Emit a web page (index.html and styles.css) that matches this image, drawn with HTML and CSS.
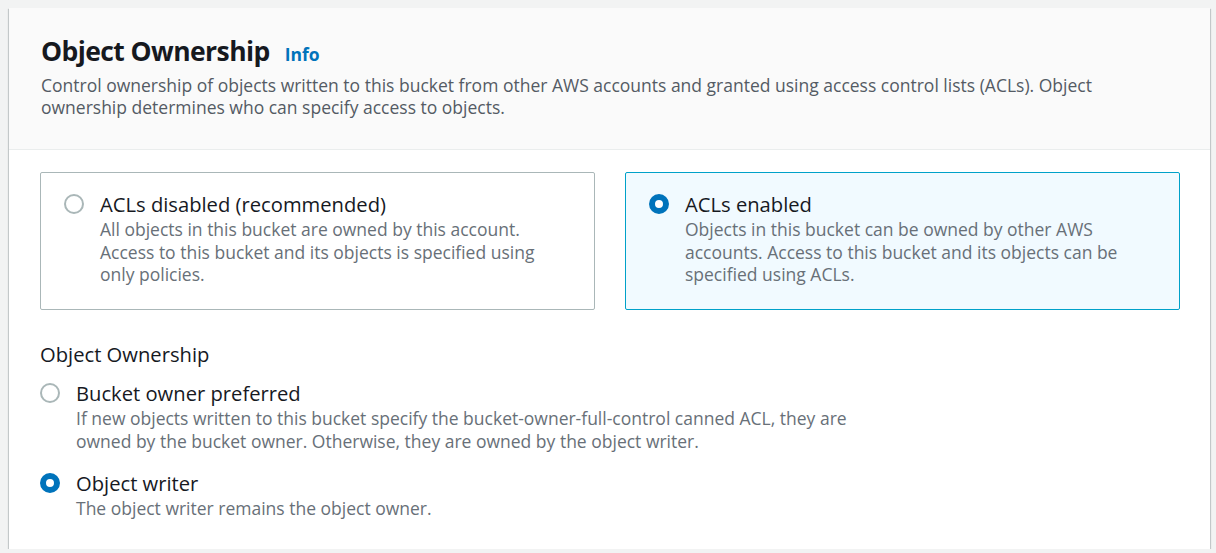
FILE: index.html
```html
<!DOCTYPE html>
<html lang="en">
<head>
<meta charset="utf-8">
<title>Object Ownership</title>
<link rel="stylesheet" href="styles.css">
</head>
<body>
<div class="container">
  <div class="header">
    <h2 class="title">Object Ownership <a class="info" href="#">Info</a></h2>
    <p class="header-desc">Control ownership of objects written to this bucket from other AWS accounts and granted using access control lists (ACLs). Object ownership determines who can specify access to objects.</p>
  </div>
  <div class="content">
    <div class="tiles">
      <div class="tile">
        <span class="radio"></span>
        <div class="tile-text">
          <div class="label">ACLs disabled (recommended)</div>
          <div class="desc">All objects in this bucket are owned by this account. Access to this bucket and its objects is specified using only policies.</div>
        </div>
      </div>
      <div class="tile tile-selected">
        <span class="radio radio-checked"></span>
        <div class="tile-text">
          <div class="label">ACLs enabled</div>
          <div class="desc">Objects in this bucket can be owned by other AWS accounts. Access to this bucket and its objects can be specified using ACLs.</div>
        </div>
      </div>
    </div>
    <div class="field-label">Object Ownership</div>
    <div class="radio-group">
      <div class="option">
        <span class="radio"></span>
        <div class="option-text">
          <div class="label">Bucket owner preferred</div>
          <div class="desc">If new objects written to this bucket specify the bucket-owner-full-control canned ACL, they are owned by the bucket owner. Otherwise, they are owned by the object writer.</div>
        </div>
      </div>
      <div class="option">
        <span class="radio radio-checked"></span>
        <div class="option-text">
          <div class="label">Object writer</div>
          <div class="desc">The object writer remains the object owner.</div>
        </div>
      </div>
    </div>
  </div>
</div>
</body>
</html>
```
FILE: styles.css
```css
html, body {
  margin: 0;
  padding: 0;
  background: #f2f3f3;
}
body {
  padding: 8px 6px 0 9px;
  font-family: "Open Sans", "Noto Sans", sans-serif;
  color: #16191f;
}
.container {
  background: #ffffff;
  box-shadow: 0 1px 1px 0 rgba(0,28,36,0.3), 1px 1px 1px 0 rgba(0,28,36,0.15), -1px 1px 1px 0 rgba(0,28,36,0.15);
  height: 541px;
  box-sizing: border-box;
}
.header {
  background: #fafafa;
  border-bottom: 1px solid #eaeded;
  padding: 26px 30px 0 32px;
  height: 142px;
  box-sizing: border-box;
}
.title {
  margin: 0;
  font-size: 26.5px;
  letter-spacing: -0.58px;
  font-weight: 700;
  line-height: 34px;
  display: flex;
  align-items: baseline;
  gap: 15px;
}
.info {
  font-size: 17.5px;
  letter-spacing: 0;
  font-weight: 700;
  color: #0073bb;
  text-decoration: none;
}
.header-desc {
  margin: 3px 0 0 0;
  max-width: 1100px;
  font-size: 17.5px;
  line-height: 22px;
  color: #545b64;
}
.content {
  padding: 22px 30px 0 31px;
}
.tiles {
  display: grid;
  grid-template-columns: 1fr 1fr;
  gap: 30px;
}
.tile {
  border: 1px solid #aab7b8;
  border-radius: 2px;
  height: 138px;
  box-sizing: border-box;
  padding: 18px 20px 0 23px;
  display: flex;
  gap: 16px;
  align-items: flex-start;
}
.tile-selected {
  border-color: #00a1c9;
  background: #f1faff;
}
.radio {
  flex: none;
  width: 20px;
  height: 20px;
  border: 2px solid #aab7b8;
  border-radius: 50%;
  box-sizing: border-box;
  background: #fff;
  margin-top: 3px;
}
.radio-checked {
  border: 6px solid #0073bb;
}
.label {
  font-size: 20.2px;
  line-height: 26px;
  color: #16191f;
}
.desc {
  margin-top: 1px;
  font-size: 17.5px;
  line-height: 22.5px;
  color: #687078;
}
.tile-text .desc {
  max-width: 455px;
}
.field-label {
  margin-top: 31px;
  font-size: 20.2px;
  line-height: 26px;
  color: #16191f;
}
.radio-group {
  margin-top: 13px;
  display: flex;
  flex-direction: column;
  gap: 18px;
}
.option {
  display: flex;
  gap: 16px;
  align-items: flex-start;
}
.option-text {
  max-width: 800px;
}
```
